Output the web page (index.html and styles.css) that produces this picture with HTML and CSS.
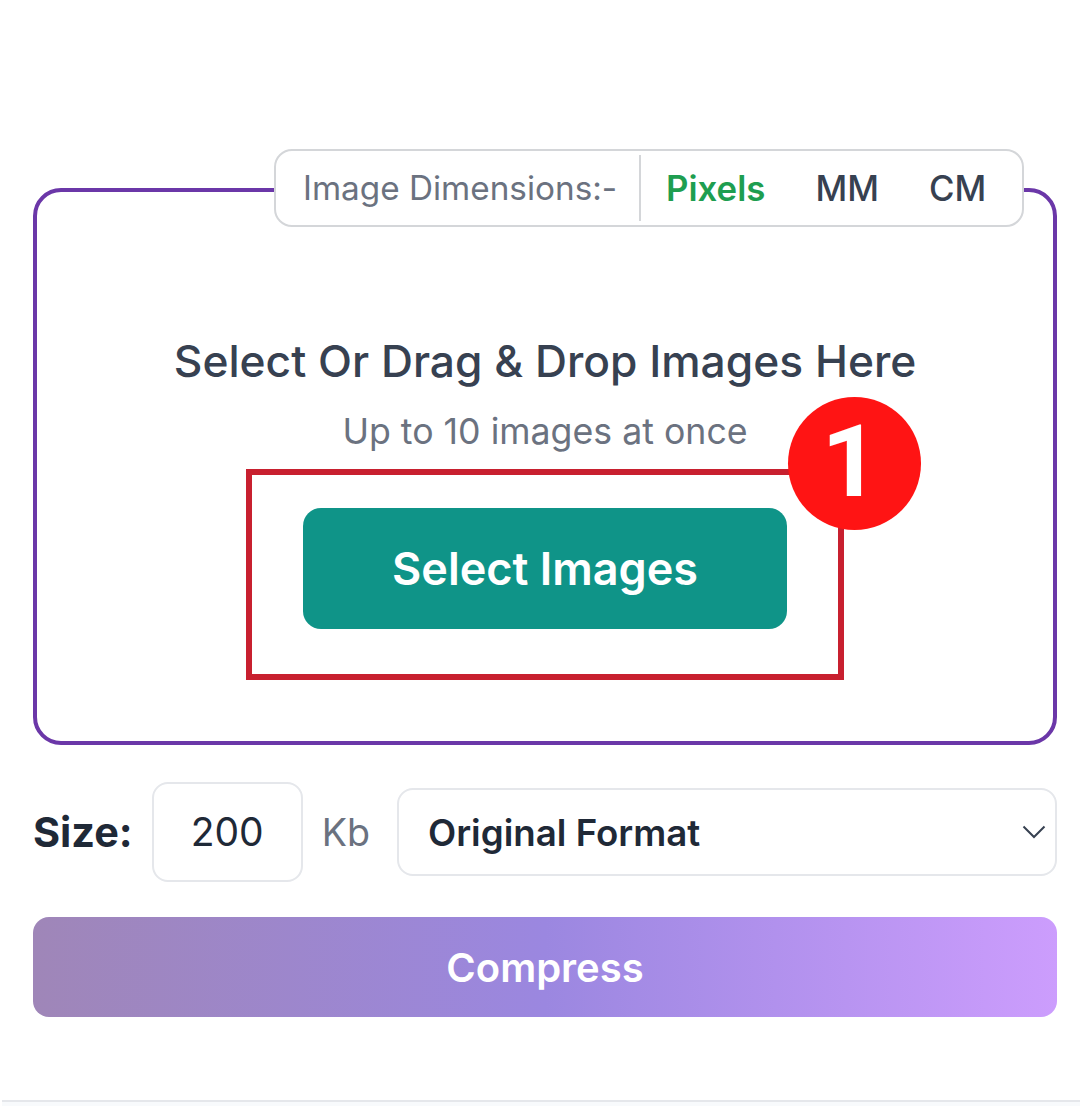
FILE: index.html
```html
<!DOCTYPE html>
<html lang="en">
<head>
    <meta charset="UTF-8">
    <meta name="viewport" content="width=device-width, initial-scale=1.0">
    <title>Image Compressor</title>
    <link rel="stylesheet" href="styles.css">
</head>
<body>
    <main class="tool">
        <section class="drop-box">
            <div class="dimension-tabs">
                <span class="tabs-label">Image Dimensions:-</span>
                <span class="tab tab-active">Pixels</span>
                <span class="tab tab-mm">MM</span>
                <span class="tab tab-cm">CM</span>
            </div>
            <h2 class="drop-title">Select Or Drag &amp; Drop Images Here</h2>
            <p class="drop-note">Up to 10 images at once</p>
            <div class="select-wrap">
                <button type="button" class="select-btn">Select Images</button>
                <span class="step-badge">1</span>
            </div>
        </section>

        <div class="options">
            <label class="size-label">Size:</label>
            <div class="size-input">200</div>
            <span class="size-unit">Kb</span>
            <div class="format-select">
                <span>Original Format</span>
                <svg class="chevron" width="24" height="14" viewBox="0 0 24 14" fill="none">
                    <path d="M1.5 1.5 L12 12 L22.5 1.5" stroke="#374151" stroke-width="2"/>
                </svg>
            </div>
        </div>

        <button type="button" class="compress-btn">Compress</button>
    </main>
    <div class="next-section"></div>
</body>
</html>
```

FILE: styles.css
```css
body {
    font-family: Inter, "Liberation Sans", sans-serif;
    margin: 0;
    background-color: #fff;
    height: 1106px;
    overflow: hidden;
}
.tool {
    padding: 188px 23px 0 33px;
    height: 912px;
    box-sizing: border-box;
}
.drop-box {
    position: relative;
    height: 557px;
    box-sizing: border-box;
    border: 4px solid #6b37a8;
    border-radius: 28px;
    padding-top: 141px;
    text-align: center;
}
.dimension-tabs {
    position: absolute;
    top: -43px;
    left: 237px;
    width: 750px;
    height: 78px;
    box-sizing: border-box;
    display: flex;
    align-items: center;
    background: #fff;
    border: 2px solid #d4d6d9;
    border-radius: 18px;
    font-size: 34.8px;
}
.tabs-label {
    width: 365px;
    height: 66px;
    line-height: 66px;
    box-sizing: border-box;
    padding-left: 27px;
    text-align: left;
    font-size: 33.3px;
    color: #6b7280;
    border-right: 2px solid #d4d6d9;
}
.tab {
    font-weight: 500;
    color: #374151;
}
.tab-active {
    margin-left: 25px;
    font-weight: 600;
    color: #1e9e50;
}
.tab-mm {
    margin-left: 50px;
}
.tab-cm {
    margin-left: 50px;
}
.drop-title {
    margin: 0;
    font-size: 44.3px;
    line-height: 56px;
    font-weight: 500;
    color: #374151;
}
.drop-note {
    margin: 20px 0 0;
    font-size: 35.7px;
    line-height: 44px;
    color: #6b7280;
}
.select-wrap {
    position: relative;
    width: 598px;
    height: 211px;
    box-sizing: border-box;
    margin: 16px 0 0 209px;
    padding: 33px 0 0 51px;
    border: 6px solid #c8202f;
    text-align: left;
}
.select-btn {
    display: block;
    width: 484px;
    height: 121px;
    border: none;
    border-radius: 18px;
    background-color: #0f9488;
    color: #fff;
    font-family: inherit;
    font-size: 45px;
    font-weight: 600;
}
.step-badge {
    position: absolute;
    top: -78px;
    left: 536px;
    width: 133px;
    height: 133px;
    box-sizing: border-box;
    padding-right: 8px;
    border-radius: 50%;
    background-color: #ff1414;
    color: #fff;
    font-family: Roboto, sans-serif;
    font-size: 101px;
    font-weight: 700;
    line-height: 129px;
    text-align: center;
}
.options {
    display: flex;
    align-items: center;
    margin-top: 37px;
    height: 100px;
}
.size-label {
    font-size: 41.4px;
    font-weight: 700;
    color: #1f2937;
}
.size-input {
    flex: none;
    width: 151px;
    height: 100px;
    box-sizing: border-box;
    margin-left: 19px;
    border: 2px solid #e5e7eb;
    border-radius: 16px;
    font-size: 39px;
    line-height: 96px;
    text-align: center;
    color: #1f2937;
}
.size-unit {
    margin-left: 19px;
    font-size: 37.6px;
    color: #6b7280;
}
.format-select {
    flex: none;
    display: flex;
    align-items: center;
    justify-content: space-between;
    width: 660px;
    height: 88px;
    box-sizing: border-box;
    margin-left: auto;
    padding: 0 9px 0 29px;
    border: 2px solid #e5e7eb;
    border-radius: 16px;
    font-size: 36.7px;
    font-weight: 600;
    color: #1f2937;
}
.compress-btn {
    display: block;
    width: 1024px;
    height: 100px;
    margin-top: 35px;
    border: none;
    border-radius: 16px;
    background: linear-gradient(90deg, #9f86b8 0%, #9b87e0 50%, #cc9dfd 100%);
    color: #fff;
    font-family: inherit;
    font-size: 40px;
    font-weight: 600;
}
.next-section {
    height: 6px;
    margin: 188px 0 0 2px;
    border-top: 2px solid #e5e7eb;
    background: #f8fafc;
}
```
